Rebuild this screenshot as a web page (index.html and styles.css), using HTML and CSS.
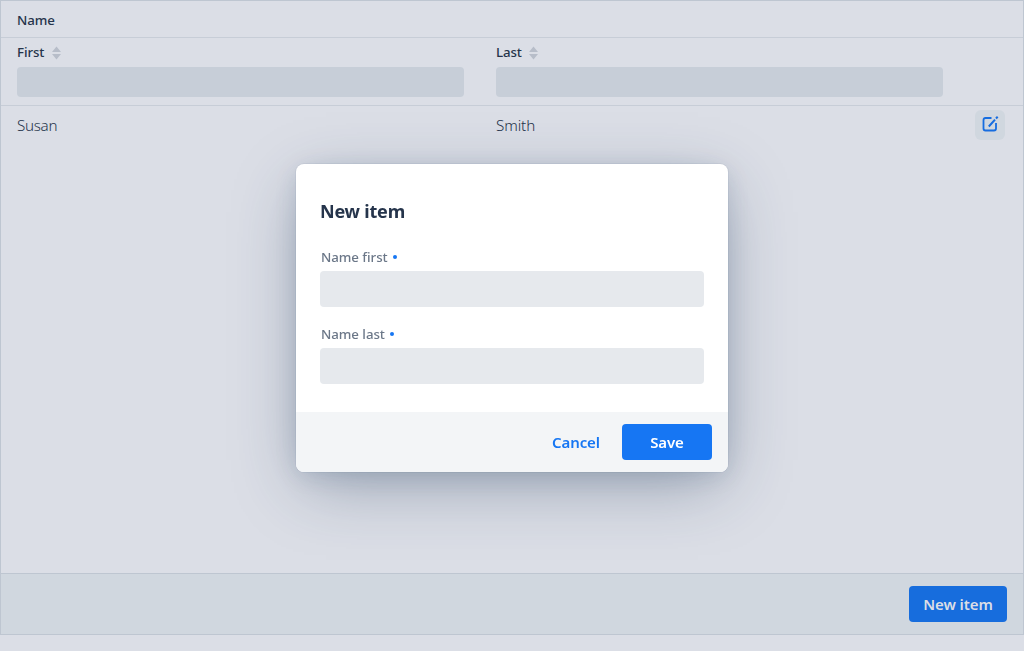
FILE: index.html
```html
<!DOCTYPE html>
<html lang="en">
<head>
<meta charset="utf-8">
<title>Items</title>
<link rel="stylesheet" href="styles.css">
</head>
<body>
<main class="crud">
  <div class="group-row"><span class="head">Name</span></div>
  <div class="filter-row">
    <div class="cell">
      <div class="sorter"><span class="head first">First</span><svg class="sort" viewBox="0 0 9 14"><path d="M4.500 0.500 9 6H0zM0 8h9l-4.500 5.500z"/></svg></div>
      <input class="filter" aria-label="First">
    </div>
    <div class="cell">
      <div class="sorter"><span class="head last">Last</span><svg class="sort" viewBox="0 0 9 14"><path d="M4.500 0.500 9 6H0zM0 8h9l-4.500 5.500z"/></svg></div>
      <input class="filter" aria-label="Last">
    </div>
  </div>
  <div class="data-row">
    <span class="value">Susan</span>
    <span class="value smith">Smith</span>
    <button class="edit" aria-label="Edit"><svg viewBox="0 0 18 18"><path d="M10.500 3H4.500Q2.500 3 2.500 5V13.500Q2.500 15.500 4.500 15.500H13Q15 15.500 15 13.500V8"/><path class="pencil" d="M7.800 11.500 14 4.600M15 3.500 16.700 1.700"/></svg></button>
  </div>
  <footer class="toolbar"><button class="primary new"><span>New item</span></button></footer>
</main>
<div class="overlay">
  <section class="dialog" role="dialog" aria-labelledby="title">
    <div class="form">
      <h3 class="title"><span id="title">New item</span></h3>
      <label class="field"><span class="label"><span>Name first</span><i class="dot"></i></span><input class="input"></label>
      <label class="field"><span class="label"><span>Name last</span><i class="dot"></i></span><input class="input"></label>
    </div>
    <footer class="actions"><button class="cancel"><span>Cancel</span></button><button class="primary save"><span>Save</span></button></footer>
  </section>
</div>
</body>
</html>
```
FILE: styles.css
```css
* { box-sizing: border-box; }
body {
  margin: 0;
  height: 651px;
  overflow: hidden;
  background: #dbdee6;
  color: #25344b;
  font-family: "Noto Sans", "Open Sans", sans-serif;
}
button, input { border: 0; font: inherit; padding: 0; margin: 0; }
button span { display: block; }
.crud {
  display: flex;
  flex-direction: column;
  height: 635px;
  border: 1px solid #bec6d1;
}
.group-row {
  height: 37px;
  padding: 9px 16px 0;
  border-bottom: 1px solid #c7cdd7;
}
.head {
  display: block;
  font-size: 13.3px;
  font-weight: 500;
  letter-spacing: -0.1px;
  line-height: 20px;
}
.filter-row {
  display: grid;
  grid-template-columns: 479px 479px;
  height: 68px;
  border-bottom: 1px solid #c7cdd7;
}
.cell { padding: 4px 16px 0; }
.sorter { display: flex; align-items: center; height: 20px; }
.first { width: 35px; }
.last { width: 33px; }
.sort { width: 9px; height: 14px; margin-top: 2px; fill: #b7bdc9; }
.filter {
  display: block;
  width: 447px;
  height: 30px;
  margin-top: 5px;
  border-radius: 4px;
  background: #c7ced8;
}
.data-row {
  display: grid;
  grid-template-columns: 479px 479px 1fr;
  flex: 1;
}
.value {
  padding: 7px 16px;
  color: #25344b;
  font-size: 15.2px;
  font-weight: 350;
  letter-spacing: -0.3px;
  line-height: 24px;
}
.smith { letter-spacing: -0.1px; }
.edit {
  width: 30px;
  height: 30px;
  margin: 4px 0 0 16px;
  border-radius: 6px;
  background: #d0d7df;
}
.edit svg {
  display: block;
  width: 18px;
  height: 18px;
  margin: -2px 0 0 6px;
  fill: none;
  stroke: #166de0;
  stroke-width: 1.8;
}
.pencil { stroke-width: 2; }
.toolbar {
  display: flex;
  justify-content: flex-end;
  height: 61px;
  padding: 12px 16px;
  border-top: 1px solid #bec6d1;
  background: #d0d7df;
}
.primary {
  height: 36px;
  border-radius: 4px;
  background: #1676f3;
  color: #fff;
  font-size: 15px;
  font-weight: 600;
  letter-spacing: -0.1px;
}
.new { width: 98px; background: #176ddd; color: #dbdee6; }
.overlay {
  position: fixed;
  inset: 0;
  display: flex;
  justify-content: center;
  align-items: flex-start;
  padding-top: 164px;
}
.dialog {
  width: 432px;
  height: 308px;
  border-radius: 8px;
  overflow: hidden;
  background: #fff;
  box-shadow: 0 0 0 1px rgba(25, 59, 103, .05), 0 4px 24px -3px rgba(27, 54, 91, .16), 0 18px 64px -8px rgba(28, 52, 84, .38);
}
.form { height: 248px; padding: 32px 24px 0; }
.title {
  height: 51px;
  margin: 0;
  font-size: 18px;
  font-weight: 700;
  letter-spacing: -0.2px;
  line-height: 30px;
}
.field { display: block; height: 77px; }
.label {
  display: flex;
  align-items: center;
  gap: 5px;
  height: 20px;
  padding-left: 1px;
  color: #6b7788;
  font-size: 13.3px;
  font-weight: 500;
  letter-spacing: -0.05px;
}
.dot { width: 4px; height: 4px; border-radius: 50%; background: #1676f3; }
.input {
  display: block;
  width: 100%;
  height: 36px;
  margin-top: 4px;
  border-radius: 4px;
  background: #e6e9ed;
}
.actions {
  display: flex;
  justify-content: flex-end;
  height: 60px;
  padding: 12px 16px;
  background: #f3f5f7;
}
.cancel {
  width: 76px;
  margin-right: 8px;
  background: none;
  color: #1676f3;
  font-size: 15px;
  font-weight: 600;
  letter-spacing: -0.1px;
}
.save { width: 90px; }
```
